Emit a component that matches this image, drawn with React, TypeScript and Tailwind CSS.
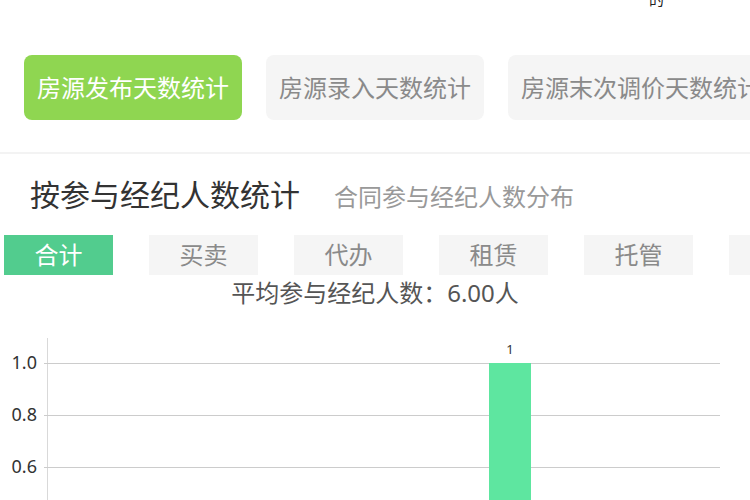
import React, { useState } from "react";

const font = { fontFamily: '"Noto Sans", "Noto Sans CJK SC", sans-serif' };

const topTabs = ["房源发布天数统计", "房源录入天数统计", "房源末次调价天数统计"];
const subTabs = ["合计", "买卖", "代办", "租赁", "托管", "其他"];

const Chart = () => {
  const grid = [
    { y: 53, label: "1.0" },
    { y: 105, label: "0.8" },
    { y: 157, label: "0.6" },
    { y: 209, label: "0.4" },
  ];
  return (
    <svg width="750" height="190" className="block">
      <line x1="47.5" y1="28" x2="47.5" y2="190" stroke="#d9d9d9" strokeWidth="1" />
      {grid.map((g) => (
        <g key={g.label}>
          <line x1="48" y1={g.y + 0.5} x2="720" y2={g.y + 0.5} stroke="#cccccc" strokeWidth="1" />
          <line x1="44" y1={g.y + 0.5} x2="48" y2={g.y + 0.5} stroke="#cccccc" strokeWidth="1" />
          <text x="37" y={g.y + 6} textAnchor="end" fontSize="18" fill="#333" style={font}>
            {g.label}
          </text>
        </g>
      ))}
      <rect x="489" y="53" width="42" height="140" fill="#5ee6a0" />
      <text x="510" y="44" textAnchor="middle" fontSize="13" fill="#333" style={font}>
        1
      </text>
    </svg>
  );
};

export default function App() {
  const [top, setTop] = useState(0);
  const [sub, setSub] = useState(0);

  return (
    <div className="w-[750px] h-[500px] overflow-hidden bg-white" style={font}>
      <div className="h-[55px] relative">
        <span className="absolute left-[649px] -top-[12px] text-[15px] text-[#222]">的</span>
      </div>

      <div className="flex gap-[24px] pl-[24px] overflow-hidden">
        {topTabs.map((t, i) => (
          <button
            key={t}
            onClick={() => setTop(i)}
            className={
              "shrink-0 h-[65px] px-[13px] rounded-[8px] text-[24px] whitespace-nowrap " +
              (i === top ? "bg-[#8fd651] text-white" : "bg-[#f5f5f5] text-[#8a8a8a]")
            }
          >
            {t}
          </button>
        ))}
      </div>

      <div className="mt-[32px] border-t-2 border-[#f3f3f3]" />

      <div className="flex items-baseline pl-[30px] mt-[22px] h-[38px]">
        <span className="text-[30px] text-[#333] leading-[38px]">按参与经纪人数统计</span>
        <span className="ml-[34px] text-[24px] text-[#999]">合同参与经纪人数分布</span>
      </div>

      <div className="flex gap-[36px] pl-[4px] mt-[21px] overflow-hidden">
        {subTabs.map((t, i) => (
          <button
            key={t}
            onClick={() => setSub(i)}
            className={
              "shrink-0 w-[109px] h-[40px] text-[24px] leading-[40px] " +
              (i === sub ? "bg-[#52cc8e] text-white" : "bg-[#f5f5f5] text-[#8a8a8a]")
            }
          >
            {t}
          </button>
        ))}
      </div>

      <div className="text-center text-[24px] text-[#555] leading-[28px] mt-[4px]">
        平均参与经纪人数：6.00人
      </div>

      <div className="mt-[3px]">
        <Chart />
      </div>
    </div>
  );
}
